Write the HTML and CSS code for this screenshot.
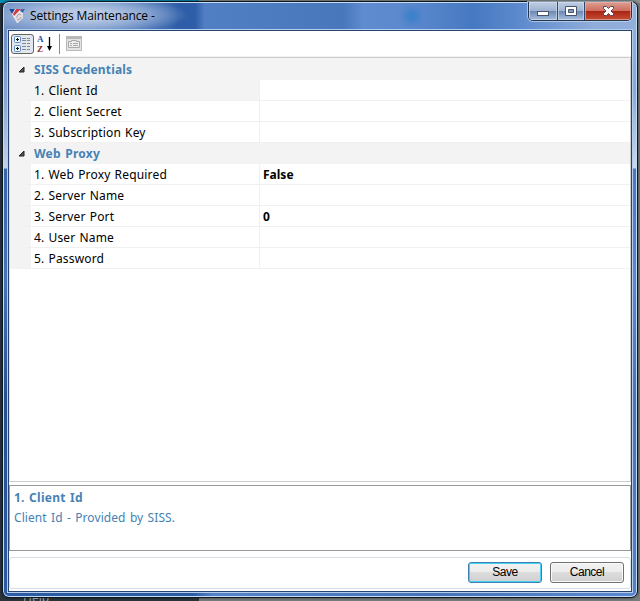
FILE: index.html
```
<!DOCTYPE html>
<html lang="en">
<head>
<meta charset="utf-8">
<title>Settings Maintenance</title>
<link rel="stylesheet" href="styles.css">
</head>
<body>
<div class="window">
  <header class="titlebar">
    <svg class="logo" width="16" height="14" viewBox="0 0 16 14"><path d="M0 0h16L9 14H8z" fill="#f5eeee"/><path d="M0 0h6L3 5z" fill="#174d9e"/><path d="M7 0h5L5 7 4 5z" fill="#d13b42"/><path d="M12 0h4l-2 4-3-2z" fill="#3d66ac"/><path d="M6 8l2-4 3-1 3 2v4l-3 3-3 1-2-3z" fill="#e0dcdf"/><path d="M8 9V7l2-2 2 1M8 11l3-1 1-2" fill="none" stroke="#a58d94" stroke-width=".8"/></svg>
    <h1>Settings Maintenance -</h1>
    <div class="controls">
      <span class="control"><svg width="28" height="18"><rect x="8.500" y="9.500" width="11" height="4" fill="#fff" stroke="#485469"/></svg></span>
      <span class="control mid"><svg width="26" height="18"><path d="M7.500 4.500h11v9h-11z" fill="#fff" stroke="#485469"/><path d="M10.500 7.500h5v3h-5z" fill="#829bc4" stroke="#485469"/></svg></span>
      <span class="control close"><svg width="46" height="18"><path d="M18.500 4.500h3l2 2 2-2h3v2l-2.500 2.500 2.500 2.500v2h-3l-2-2-2 2h-3v-2L21 9l-2.500-2.500z" fill="#fff" stroke="#584752"/></svg></span>
    </div>
  </header>
  <main class="client">
    <div class="toolbar">
      <span class="tool active"><svg width="23" height="20"><g fill="#eef6ff" stroke="#608fc2"><rect x="3.500" y="2.500" width="6" height="6" rx="1"/><rect x="3.500" y="11.500" width="6" height="6" rx="1"/></g><path d="M5 5.500h3M6.500 4v3M5 14.500h3M6.500 13v3" stroke="#111" stroke-width="1"/><path d="M11 4.500h4m1 0h3M11 6.500h4m1 0h3M11 9.500h4m1 0h3M11 12.500h4m1 0h3M11 15.500h4m1 0h3" stroke="#7b88a0"/></svg></span>
      <span class="tool sort"><svg width="17" height="18"><path d="M12.500 2v12" stroke="#000" stroke-width="1.300"/><path d="M10 11h5l-2.500 5z"/><text class="az a" x="0" y="7">A</text><text class="az z" x="0" y="17">Z</text></svg></span>
      <i class="divider"></i>
      <span class="tool pages"><svg width="16" height="15"><rect x=".5" y=".5" width="15" height="14" fill="#e4e4e4" stroke="#bababa"/><path d="M1 2h14" stroke="#b6b6b6" stroke-width="2"/><path d="M2.500 11.500v-6h3v-1h5v1h3v6z" fill="#eee" stroke="#aaa"/><path d="M4 7.500h2m1 0h5M4 9.500h2m1 0h5" stroke="#aaa"/></svg></span>
    </div>
    <section class="grid">
      <div class="category"><svg width="7" height="7"><path d="M6 1v5H1z" fill="#555" stroke="#222"/></svg><h2>SISS Credentials</h2></div>
      <div class="row selected"><span>1. Client Id</span><b></b></div>
      <div class="row"><span>2. Client Secret</span><b></b></div>
      <div class="row"><span>3. Subscription Key</span><b></b></div>
      <div class="category"><svg width="7" height="7"><path d="M6 1v5H1z" fill="#555" stroke="#222"/></svg><h2 class="wide">Web Proxy</h2></div>
      <div class="row"><span>1. Web Proxy Required</span><b>False</b></div>
      <div class="row"><span>2. Server Name</span><b></b></div>
      <div class="row"><span>3. Server Port</span><b>0</b></div>
      <div class="row"><span>4. User Name</span><b></b></div>
      <div class="row"><span>5. Password</span><b></b></div>
    </section>
    <section class="description"><h2 class="wide">1. Client Id</h2><p>Client Id - Provided by SISS.</p></section>
    <footer class="actions"><button class="save">Save</button><button>Cancel</button></footer>
  </main>
</div>
<div class="behind">Help</div>
</body>
</html>
```
FILE: styles.css
```
* { box-sizing: border-box; }
body {
  margin: 0;
  width: 640px;
  height: 601px;
  padding: 1px 2px 0;
  overflow: hidden;
  position: relative;
  font: 12px/20px "Noto Sans", sans-serif;
  color: #000;
  background:
    linear-gradient(90deg, #058fb5 199px, #89918b 199px) 0 0 / 100% 3px no-repeat,
    linear-gradient(90deg, #29343b 199px, #797c7c 199px);
}
h1, h2, p { margin: 0; font-size: 12px; }
svg { display: block; }
.window {
  width: 636px;
  height: 597px;
  border: 1px solid #101722;
  border-radius: 7px;
  padding: 0 4px 5px;
  box-shadow: inset 0 0 0 1px #c5dcf5, 0 0 3px #0009;
  background:
    linear-gradient(180deg, #91aedb 0, #87a8d9 60px, #c9d8ed 138px, #4d78be 139px, #5e89cf 250px, #4975b8 370px, #5782c9 100%) right 28px / 5px 100% no-repeat,
    linear-gradient(180deg, #6d8fc4 0, #8aa6d2 70px, #c3d1e8 138px, #3864ac 139px, #4773b9 250px, #244f93 370px, #2d5da4 100%) left 28px / 5px 100% no-repeat,
    linear-gradient(90deg, #2b5ba2 190px, #5682c9 210px, #4772b8 430px, #5b88cf) 0 100% / 100% 10px no-repeat,
    radial-gradient(circle at 409px 14px, #3e81cb 3px, #4b82ca88 9px, transparent 14px),
    radial-gradient(ellipse 105px 20px at 80px 13px, #b7c8e3 25%, #a2b9dcbb 60%, transparent 100%),
    linear-gradient(90deg, #6e90c4 0, #6388c1 100px, #3c69b0 165px, #2e5ea8 175px, #2e5ea8 192px, #527fc4 202px, #4e7dc2 240px, #4877bb 340px, #5f8bcf 360px, #5b88cd 410px, #4679c2 470px, #5f8bce 520px, #90addb 590px, #92aedb);
}
.titlebar {
  height: 28px;
  display: flex;
  align-items: flex-start;
  padding-left: 2px;
}
.logo { margin-top: 7px; }
h1 {
  margin: 4px 0 0 5px;
  font: 12px/20px "Open Sans", sans-serif;
  letter-spacing: -.12px;
  white-space: nowrap;
}
.controls {
  display: flex;
  height: 19px;
  margin: 0 1px 0 auto;
  border: 1px solid #26364f;
  border-top: 0;
  border-radius: 0 0 5px 5px;
  box-shadow: 0 0 0 1px #c9dcf0aa;
  overflow: hidden;
}
.control {
  width: 28px;
  height: 18px;
  background: linear-gradient(#c0cee2, #9eb2d2 48%, #6b87b5 50%, #a7bddd);
  box-shadow: inset 0 0 0 1px #d2dfefaa;
}
.control.mid { width: 28px; border: solid #314769; border-width: 0 1px; }
.close { width: 46px; background: linear-gradient(#dfa096, #cd6e5f 48%, #a82312 50%, #c74e35); box-shadow: inset 0 0 0 1px #ebb5aaaa; }
.client {
  width: 624px;
  height: 562px;
  margin-left: 1px;
  display: flex;
  flex-direction: column;
  background: #fff;
  border: 1px solid #25446f;
  outline: 1px solid #b5cdec;
}
.toolbar {
  height: 26px;
  flex: none;
  display: flex;
  align-items: flex-start;
  padding: 3px 0 0 2px;
  border-bottom: 1px solid #f2f2f2;
}
.tool.active {
  width: 23px;
  height: 20px;
  border: 1px solid #666;
  border-radius: 3px;
  background: #e3e6ea;
}
.active svg { margin: -1px; }
.sort { margin: 1px 0 0 3px; }
.az { font: bold 9px "Liberation Serif", serif; }
.a { fill: #2454a6; }
.z { fill: #8f2929; }
.divider { width: 1px; height: 20px; margin: 0 6px 0 5px; background: #888; }
.pages { margin-top: 2px; }
.grid {
  height: 425px;
  flex: none;
  padding-top: 1px;
  border: 1px solid #ccc;
  border-left-color: #ddd;
  background: linear-gradient(#f4f4f4, #f4f4f4) 0 0 / 100% 1px no-repeat;
}
.category {
  height: 21px;
  display: flex;
  align-items: center;
  padding: 1px 0 0 8px;
  background: #f3f3f3;
}
.category svg { margin-bottom: 1px; }
h2 { color: #4682b4; font-weight: bold; line-height: 20px; letter-spacing: .15px; }
h2.wide { letter-spacing: .25px; word-spacing: 1px; }
.category h2 { margin-left: 9px; }
.row {
  height: 21px;
  display: grid;
  grid-template-columns: 229px 1fr;
  border-left: 21px solid #f3f3f3;
  border-bottom: 1px solid #f0f0f0;
  line-height: 22px;
}
.row span {
  height: 20px;
  padding-left: 3px;
  border-right: 1px solid #f0f0f0;
  letter-spacing: .17px;
  word-spacing: .8px;
}
.row b { height: 20px; padding-left: 3px; }
.selected span { background: #f3f3f3; }
.description {
  height: 66px;
  flex: none;
  margin-top: 3px;
  padding: 1px 4px;
  border: 1px solid #999;
  color: #4682b4;
}
.description h2 { line-height: 21px; }
.description p { line-height: 20px; letter-spacing: .08px; word-spacing: 1.1px; }
.actions {
  height: 32px;
  margin-top: 6px;
  display: flex;
  gap: 8px;
  justify-content: flex-end;
  padding: 4px 6px 0 0;
  border: 1px solid #d5dfe5;
  border-radius: 3px;
}
button {
  width: 74px;
  height: 21px;
  padding: 0;
  border: 1px solid #707070;
  border-radius: 3px;
  background: linear-gradient(#f2f2f2, #ebebeb 49%, #ddd 50%, #cfcfcf);
  box-shadow: inset 0 0 0 1px #fafafa;
  font: 12px/17px "Liberation Sans", sans-serif;
  letter-spacing: -.5px;
}
.save { border-color: #3c7fb1; box-shadow: inset 0 0 0 1px #48d1f5; }
.behind {
  position: absolute;
  left: 23px;
  top: 598px;
  height: 3px;
  overflow: hidden;
  line-height: 0;
  color: #919b9c;
}
```
